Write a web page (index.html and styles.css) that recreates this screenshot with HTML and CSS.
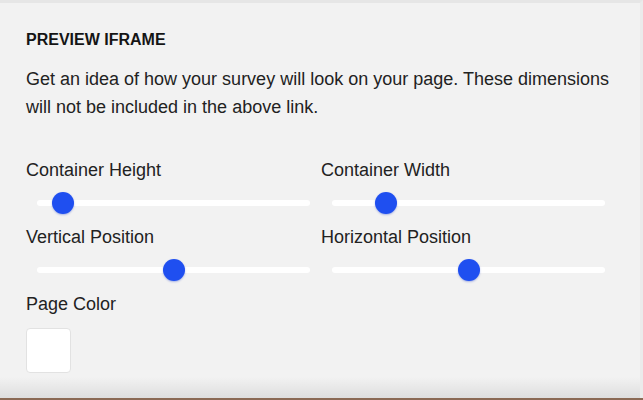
FILE: index.html
```html
<!DOCTYPE html>
<html lang="en">
<head>
    <meta charset="UTF-8">
    <meta name="viewport" content="width=device-width, initial-scale=1.0">
    <title>Preview Iframe</title>
    <link rel="stylesheet" href="styles.css">
</head>
<body>
    <div class="panel">
        <h2 class="panel-title">PREVIEW IFRAME</h2>
        <p class="panel-desc">Get an idea of how your survey will look on your page. These dimensions will not be included in the above link.</p>

        <div class="controls">
            <label class="control">
                <span class="control-label">Container Height</span>
                <input type="range" min="0" max="100" value="6">
            </label>
            <label class="control">
                <span class="control-label">Container Width</span>
                <input type="range" min="0" max="100" value="17">
            </label>
            <label class="control">
                <span class="control-label">Vertical Position</span>
                <input type="range" min="0" max="100" value="50">
            </label>
            <label class="control">
                <span class="control-label">Horizontal Position</span>
                <input type="range" min="0" max="100" value="50">
            </label>
        </div>

        <div class="color-field">
            <span class="control-label">Page Color</span>
            <div class="swatch"></div>
        </div>
    </div>
</body>
</html>
```

FILE: styles.css
```css
html, body {
    margin: 0;
    height: 100%;
}
body {
    font-family: "Liberation Sans", Arial, sans-serif;
    color: #222;
    background: #8b6a55;
    overflow: hidden;
}
.panel {
    box-sizing: border-box;
    height: 398px;
    padding: 27px 27px 0 26px;
    border-top: 3px solid #e6e6e6;
    border-right: 3px solid #ebebeb;
    background: linear-gradient(to bottom, #f2f2f2 0, #f2f2f2 374px, #dedede 100%);
}
.panel-title {
    margin: 0;
    font-size: 16px;
    line-height: 20px;
    font-weight: bold;
    color: #151515;
}
.panel-desc {
    margin: 15px 0 0;
    font-size: 18px;
    line-height: 28px;
}
.controls {
    display: grid;
    grid-template-columns: 295px 295px;
    margin-top: 38px;
}
.control {
    display: flex;
    flex-direction: column;
}
.control-label {
    font-size: 18px;
    line-height: 22px;
}
.control input[type="range"] {
    -webkit-appearance: none;
    appearance: none;
    width: 273px;
    height: 22px;
    margin: 11px 11px 12px;
    padding: 0;
    background: transparent;
}
.control input[type="range"]::-webkit-slider-runnable-track {
    height: 6px;
    border-radius: 3px;
    background: #fff;
}
.control input[type="range"]::-webkit-slider-thumb {
    -webkit-appearance: none;
    width: 22px;
    height: 22px;
    margin-top: -8px;
    border-radius: 50%;
    background: #1f4ff0;
    box-shadow: 0 1px 2px rgba(30, 60, 200, 0.35);
}
.color-field {
    display: flex;
    flex-direction: column;
    align-items: flex-start;
}
.swatch {
    width: 43px;
    height: 43px;
    margin-top: 13px;
    border: 1px solid #e2e2e2;
    border-radius: 4px;
    background: #fff;
}
```
